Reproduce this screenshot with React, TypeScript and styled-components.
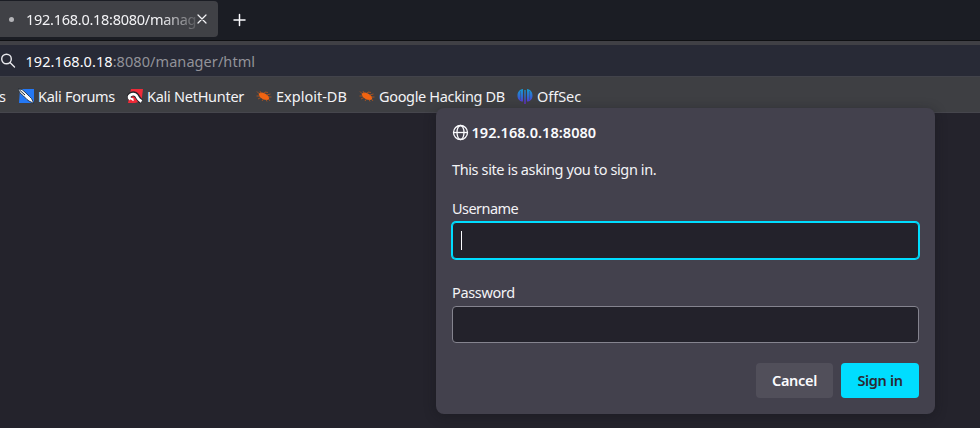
import React, { ReactNode } from 'react';
import styled, { createGlobalStyle } from 'styled-components';

const GlobalStyle = createGlobalStyle`
  * { box-sizing: border-box; }
  body { margin: 0; background: #24232c; overflow: hidden; }
`;

const Window = styled.div`
  position: relative;
  width: 980px;
  height: 428px;
  overflow: hidden;
  display: flex;
  flex-direction: column;
  background: #24232c;
  color: #f3f3f6;
  font: 14.5px/20px 'Noto Sans', sans-serif;
`;

const Text = styled.span<{ $spacing?: number }>`
  white-space: nowrap;
  letter-spacing: ${(p) => p.$spacing ?? 0}px;
`;

const TabStrip = styled.div`
  display: flex;
  flex: none;
  height: 41px;
  padding-top: 1px;
  background: #1b1d24;
  border-bottom: 1px solid #0f1013;
`;

const Tab = styled.div`
  display: flex;
  align-items: center;
  width: 218px;
  height: 36px;
  padding-left: 9px;
  background: #404146;
  border-radius: 0 4px 4px 0;
`;

const Throbber = styled.i`
  width: 5px;
  height: 5px;
  margin-right: 12px;
  border-radius: 50%;
  background: #b4b4b8;
`;

const TabLabel = styled.div`
  width: 170px;
  white-space: nowrap;
  mask-image: linear-gradient(to right, #000 134px, transparent 176px);
`;

const TabClose = styled.svg`
  flex: none;
`;

const NewTab = styled.svg`
  margin: 12px 0 0 14px;
`;

const AddressBar = styled.div`
  display: flex;
  align-items: center;
  flex: none;
  height: 36px;
  border-top: 4px solid #404045;
  border-bottom: 1px solid #42434b;
  background: #282a36;
`;

const Address = styled.div`
  margin-left: 9.5px;
  color: #929299;
`;

const Host = styled.span`
  color: #fbfbfe;
`;

const Bookmarks = styled.div`
  display: flex;
  align-items: center;
  flex: none;
  height: 36px;
  padding-top: 3px;
  background: #3e3f43;
  border-bottom: 1px solid #46464d;
`;

const Bookmark = styled.div<{ $width: number }>`
  display: flex;
  align-items: center;
  flex: none;
  gap: 4px;
  width: ${(p) => p.$width}px;
`;

const Dialog = styled.section`
  position: absolute;
  left: 436px;
  top: 108px;
  width: 499px;
  height: 306px;
  padding: 14px 16px 16px;
  display: flex;
  flex-direction: column;
  background: #43414d;
  border-radius: 8px;
  box-shadow: 0 2px 12px rgba(20, 20, 24, 0.4);
`;

const Title = styled.h1`
  display: flex;
  align-items: center;
  gap: 2.5px;
  height: 20px;
  margin: 0 0 17px;
  color: #fbfbfe;
  font: 600 14.5px/20px 'Noto Sans', sans-serif;
`;

const Message = styled.p`
  height: 20px;
  margin: 0 0 19px;
`;

const Field = styled.label<{ $gap: number }>`
  display: flex;
  flex-direction: column;
  gap: 4px;
  margin-bottom: ${(p) => p.$gap}px;
`;

const Input = styled.input<{ $active?: boolean }>`
  height: 37px;
  padding: 0 8px;
  background: #23222b;
  color: #fbfbfe;
  border: 1px solid ${(p) => (p.$active ? '#00ddff' : '#85848f')};
  box-shadow: ${(p) => (p.$active ? '0 0 0 1px #00ddff' : 'none')};
  border-radius: 4px;
  outline: none;
`;

const FieldBox = styled.div`
  position: relative;
  display: grid;
`;

const Caret = styled.i`
  position: absolute;
  left: 9px;
  top: 9px;
  width: 1px;
  height: 19px;
  background: #fbfbfe;
`;

const Actions = styled.div`
  display: flex;
  justify-content: flex-end;
  gap: 8px;
`;

const Button = styled.button<{ $primary?: boolean }>`
  width: ${(p) => (p.$primary ? 78 : 77)}px;
  height: 35px;
  padding: 0 0 2px;
  border: 0;
  border-radius: 4px;
  font: 600 14.5px/20px 'Noto Sans', sans-serif;
  background: ${(p) => (p.$primary ? '#00ddff' : '#514f5a')};
  color: ${(p) => (p.$primary ? '#2b2a33' : '#fbfbfe')};
`;

const ForumsIcon = () => (
  <svg width="16" height="16" viewBox="0 0 16 16">
    <path d="M2 1H16V15H1Z" fill="#2478f5" />
    <path d="M0 1l4 .5 4 3.500 3.500 3.500 2 2 2.500 5-5-2.500-2-1.500L5.500 8 2 5z" fill="#f7f8fa" stroke="#1b2430" strokeWidth=".8" />
    <path d="M1.500 2l5.500 5" stroke="#1b2430" strokeWidth="1" />
  </svg>
);

const NetHunterIcon = () => (
  <svg width="16" height="16" viewBox="0 0 16 16">
    <path d="M4 1H16L14.500 13 8 15H1z" fill="#ee2a38" />
    <path d="M2 10C2 6 6 5 8.500 6.500c2.500 1.500 2.500 5 6 7" fill="none" stroke="#24252b" strokeWidth="5" />
    <path d="M6.500 11.500C2 12 1 8.500 3.500 7 7 5 9.500 7 10.500 9.500c.8 2 2.500 3 4 4" fill="none" stroke="#fff" strokeWidth="2.800" />
    <path d="M3 12l3.500 2.500" stroke="#ee2a38" strokeWidth="2" />
  </svg>
);

const ExploitIcon = () => (
  <svg width="16" height="16" viewBox="0 0 16 16">
    <ellipse cx="8" cy="8.300" rx="5.700" ry="3" transform="rotate(28 8 8.300)" fill="#f26411" />
    <path d="M3.500 6L1 3.500M5 5.500L4 3M8 5.500L9 4l3 .5M10.500 7l4-1M12 9h3.500M12.500 11l1.500 2M10 11.500l1 2M7.500 11l-1.500 2M5 9.500L2 11M4 8H.5" fill="none" stroke="#b9551b" strokeWidth=".8" />
  </svg>
);

const OffSecIcon = () => (
  <svg width="16" height="16" viewBox="0 0 16 16">
    <defs>
      <linearGradient id="offsec" x1="0" y1="0" x2="0" y2="1">
        <stop stopColor="#169bd0" />
        <stop offset=".55" stopColor="#3364d3" />
        <stop offset="1" stopColor="#6b25cc" />
      </linearGradient>
    </defs>
    <path d="M6 1v12.500C2.500 13.500.5 11 .5 7.500S2.500 1.500 6 1zM10 1c3.500.5 5.500 3 5.500 6.500S13.500 13.500 10 13.500zM7.300 2h1.400v14H7.300z" fill="url(#offsec)" />
    <path d="M3.500 3v9M12.500 3v9" stroke="#3e3f43" strokeWidth=".4" />
  </svg>
);

const bookmarks: { icon: ReactNode; label: string; width: number; spacing: number }[] = [
  { icon: <ForumsIcon />, label: 'Kali Forums', width: 109, spacing: -0.28 },
  { icon: <NetHunterIcon />, label: 'Kali NetHunter', width: 129, spacing: -0.27 },
  { icon: <ExploitIcon />, label: 'Exploit-DB', width: 103, spacing: 0 },
  { icon: <ExploitIcon />, label: 'Google Hacking DB', width: 158, spacing: -0.34 },
  { icon: <OffSecIcon />, label: 'OffSec', width: 70, spacing: -0.05 },
];

const PreviousLabel = styled.div`
  width: 19px;
  flex: none;
  margin-left: -1px;
`;

export default function App() {
  return (
    <Window>
      <GlobalStyle />
      <TabStrip>
        <Tab>
          <Throbber />
          <TabLabel><Text $spacing={-0.27}>192.168.0.18:8080/manag</Text></TabLabel>
          <TabClose width="12" height="12" viewBox="0 0 12 12" stroke="#f4f4f7" strokeWidth="1.2" strokeLinecap="round">
            <path d="M2 2l8 8M10 2l-8 8" />
          </TabClose>
        </Tab>
        <NewTab width="14" height="14" viewBox="0 0 14 14" stroke="#fbfbfe" strokeWidth="1.500" strokeLinecap="round">
          <path d="M7.500 1.500v11M2 7h11" />
        </NewTab>
      </TabStrip>
      <AddressBar>
        <svg width="16" height="16" viewBox="0 0 16 16" fill="none" stroke="#e8e8ec" strokeWidth="1.400" strokeLinecap="round">
          <circle cx="6.500" cy="6" r="4.800" />
          <path d="M10 9.500l4.500 4.500" />
        </svg>
        <Address><Text $spacing={0.07}><Host>192.168.0.18</Host>:8080/manager/html</Text></Address>
      </AddressBar>
      <Bookmarks>
        <PreviousLabel>s</PreviousLabel>
        {bookmarks.map((b) => (
          <Bookmark key={b.label} $width={b.width}>
            {b.icon}
            <Text $spacing={b.spacing}>{b.label}</Text>
          </Bookmark>
        ))}
      </Bookmarks>
      <Dialog>
        <Title>
          <svg width="17" height="17" viewBox="0 0 17 17" fill="none" stroke="#fbfbfe" strokeWidth="1.300">
            <circle cx="8.500" cy="8.500" r="7" />
            <ellipse cx="8.500" cy="8.500" rx="3.500" ry="7" />
            <path d="M1.500 8.500h14" />
          </svg>
          <Text $spacing={0.05}>192.168.0.18:8080</Text>
        </Title>
        <Message><Text $spacing={-0.38}>This site is asking you to sign in.</Text></Message>
        <Field $gap={23}>
          <Text $spacing={-0.55}>Username</Text>
          <FieldBox><Input $active /><Caret /></FieldBox>
        </Field>
        <Field $gap={20}>
          <Text $spacing={-0.35}>Password</Text>
          <FieldBox><Input type="password" /></FieldBox>
        </Field>
        <Actions>
          <Button><Text $spacing={-0.3}>Cancel</Text></Button>
          <Button $primary><Text $spacing={-0.35}>Sign in</Text></Button>
        </Actions>
      </Dialog>
    </Window>
  );
}
